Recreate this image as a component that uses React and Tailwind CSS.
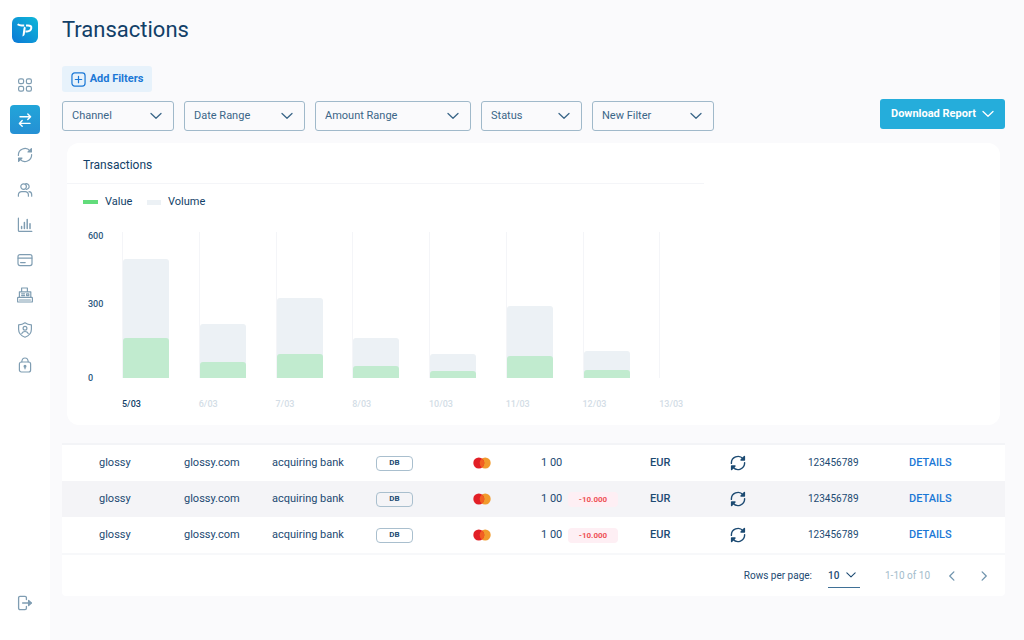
import React, { useState } from 'react';
import clsx from 'clsx';

const Icon = ({ children, className = 'w-4 h-4', strokeWidth = 1.1 }) => (
    <svg
        viewBox="0 0 16 16"
        className={className}
        fill="none"
        stroke="currentColor"
        strokeWidth={strokeWidth}
        strokeLinecap="round"
        strokeLinejoin="round"
        aria-hidden="true"
    >
        {children}
    </svg>
);

const Chevron = ({ className }) => (
    <svg viewBox="0 0 12 8" className={className} fill="none" stroke="currentColor" strokeWidth="1.3" strokeLinecap="round" strokeLinejoin="round" aria-hidden="true">
        <path d="M1 1.5 6 6.2 11 1.5" />
    </svg>
);

const refreshShape = (
    <>
        <path d="M1.4 8.4A6.6 6.6 0 0 1 13 3.8" />
        <path d="M14.6 7.6A6.6 6.6 0 0 1 3 12.2" />
        <path d="M14.4 1.6v3.4h-3.4z" fill="currentColor" />
        <path d="M1.6 14.4v-3.4h3.4z" fill="currentColor" />
    </>
);

const menu = [
    {
        label: 'Dashboard',
        shape: (
            <>
                <rect x="1.6" y="1.9" width="5" height="4.8" rx="1.6" />
                <rect x="9.4" y="1.9" width="5" height="4.8" rx="1.6" />
                <rect x="1.6" y="9.4" width="5" height="4.8" rx="1.6" />
                <rect x="9.4" y="9.4" width="5" height="4.8" rx="1.6" />
            </>
        ),
    },
    {
        label: 'Transactions',
        active: true,
        shape: (
            <>
                <path d="M3 4.8h10.6M10.8 2l2.8 2.8-2.8 2.8" />
                <path d="M13 11.4H2.4M5.2 8.6l-2.8 2.8 2.8 2.8" />
            </>
        ),
    },
    { label: 'Recurring', shape: refreshShape },
    {
        label: 'Customers',
        shape: (
            <>
                <circle cx="6.6" cy="4.6" r="2.8" />
                <path d="M8.6 1.8a2.8 2.8 0 1 1 .6 5.5" />
                <path d="M1.4 14.2v-1.4A3.2 3.2 0 0 1 4.6 9.6h3.6a3.2 3.2 0 0 1 3.2 3.2v1.4" />
                <path d="M12 9.7a3 3 0 0 1 2.7 3v1.5" />
            </>
        ),
    },
    {
        label: 'Reports',
        shape: (
            <>
                <path d="M1.4 1.2v12.2a1 1 0 0 0 1 1h12.4" />
                <path d="M4.6 11.6V9.4M7.4 11.6V5.6M10.2 11.6V2.6M13 11.6V6.8" strokeWidth="1.5" />
            </>
        ),
    },
    {
        label: 'Cards',
        shape: (
            <>
                <rect x="1" y="2.6" width="14" height="11" rx="2" />
                <path d="M1.2 6.2h13.6M3.6 10.6h4.6" />
            </>
        ),
    },
    {
        label: 'Point of sale',
        shape: (
            <>
                <path d="M4.6 4.4V1h5.800v3.400" />
                <path d="M2.400 10V4.800h11.400V10" />
                <rect x="0.6" y="10.4" width="14.8" height="4.6" rx="0.6" />
                <path d="M2.6 13h10.8M4.600 6.800h3M4.600 8.600h3M9.600 6.800h2.200v1.800H9.600z" />
            </>
        ),
    },
    {
        label: 'Security',
        shape: (
            <>
                <path d="M8 .8c1.8 1.4 4 2 6.4 2v4.4c0 4-2.6 6.6-6.4 8-3.8-1.4-6.4-4-6.4-8V2.8C4 2.8 6.2 2.2 8 .8z" />
                <circle cx="8" cy="6.2" r="1.9" />
                <path d="M4.8 11.6c.6-1.4 1.7-2.1 3.2-2.1s2.6.7 3.2 2.1" />
            </>
        ),
    },
    {
        label: 'Access',
        shape: (
            <>
                <rect x="2.4" y="5" width="11.2" height="10" rx="2" />
                <path d="M4.8 4.8C5 2.4 6.2 1 8 1s3 1.4 3.2 3.8" />
                <circle cx="8" cy="9.2" r=".9" fill="currentColor" />
                <path d="M8 9.8v2" />
            </>
        ),
    },
];

const filters = [
    { label: 'Channel', width: 'w-[112px]' },
    { label: 'Date Range', width: 'w-[121px]' },
    { label: 'Amount Range', width: 'w-[156px]' },
    { label: 'Status', width: 'w-[101px]' },
    { label: 'New Filter', width: 'w-[122px]' },
];

// bar heights are in chart pixels
const days = [
    { day: '5/03', volume: 119, value: 40 },
    { day: '6/03', volume: 54, value: 16 },
    { day: '7/03', volume: 80, value: 24 },
    { day: '8/03', volume: 40, value: 12 },
    { day: '10/03', volume: 24, value: 7 },
    { day: '11/03', volume: 72, value: 22 },
    { day: '12/03', volume: 27, value: 8 },
    { day: '13/03', volume: 0, value: 0 },
];

const rows = [
    { id: 1, refund: null },
    { id: 2, refund: '-10.000' },
    { id: 3, refund: '-10.000' },
];

const Logo = () => (
    <svg viewBox="0 0 26 26" className="w-[26px] h-[26px]" role="img" aria-label="Home">
        <defs>
            <linearGradient id="logo" x1="1" y1="0" x2="0" y2="1">
                <stop offset="0" stopColor="#0fb8d8" />
                <stop offset="1" stopColor="#0b78d6" />
            </linearGradient>
        </defs>
        <rect width="26" height="26" rx="6" fill="url(#logo)" />
        <path d="M5.6 7.2c1.2.9 2.4 1.2 4 1.2h2.6M14 8.4h2c2.4 0 3.6 1 3.3 2.8-.3 2-1.9 3.2-4.3 3.2h-1.6" fill="none" stroke="#fff" strokeWidth="2" strokeLinejoin="round" />
        <path d="M12.8 9.4c-.9.7-1.2 1.4-1.4 2.6l-1 7.4c1.5-.4 2.2-1.2 2.4-2.6l.9-6z" fill="#fff" />
    </svg>
);

const Sidebar = () => (
    <nav className="w-[50px] shrink-0 bg-white flex flex-col items-center pt-[17px] pb-[29px]" aria-label="Main">
        <a href="#home"><Logo /></a>
        <div className="mt-[27px] flex flex-col gap-1.5">
            {menu.map((item) => (
                <button
                    key={item.label}
                    type="button"
                    aria-label={item.label}
                    className={clsx(
                        'w-[30px] h-[29px] rounded-sm flex items-center justify-center',
                        item.active ? 'bg-linear-to-b from-[#22a5d9] to-[#2590d4] text-white' : 'text-[#7f9db2]'
                    )}
                >
                    <Icon strokeWidth={item.active ? 1.4 : 1.2}>{item.shape}</Icon>
                </button>
            ))}
        </div>
        <button type="button" aria-label="Log out" className="mt-auto text-[#7f9db2]">
            <Icon strokeWidth={1.3}>
                <path d="M9.4 4.6V2.8a1.4 1.4 0 0 0-1.4-1.4H3a1.4 1.4 0 0 0-1.4 1.4v10.4A1.4 1.4 0 0 0 3 14.6h5a1.4 1.4 0 0 0 1.4-1.4v-1.8" />
                <path d="M5.6 8h8.4" />
                <path d="M11.6 5.4 14.4 8l-2.8 2.6z" fill="currentColor" />
            </Icon>
        </button>
    </nav>
);

const Chart = () => (
    <section className="mx-[5px] mt-3 bg-white rounded-xl pb-[15px]">
        <h2 className="max-w-[637px] h-[41px] pl-4 pt-1 flex items-center border-b border-[#f4f5f8] text-[12px] text-[#123f68]">Transactions</h2>
        <div className="flex items-center h-9 pl-4 text-[11px] text-[#123f68]">
            <span className="w-[15px] h-1 bg-[#62dc7b]" />
            <span className="ml-[7px] w-[42px]">Value</span>
            <span className="w-3.5 h-[5px] bg-[#ecf1f5]" />
            <span className="ml-[7px]">Volume</span>
        </div>
        <div className="flex pl-[21px] pt-3">
            <div className="w-[34px] shrink-0 h-[152px] flex flex-col text-[9px] leading-3 font-medium text-[#2d5a80]">
                <span className="-mt-0.5">600</span>
                <span className="mt-14">300</span>
                <span className="mt-auto">0</span>
            </div>
            <div className="grid grid-cols-8 w-full max-w-[614px]">
                {days.map((d, i) => (
                    <div key={d.day}>
                        <div className="h-[146px] border-l border-[#f4f5f8] flex items-end">
                            <div className="w-[46px] rounded-t-[3px] bg-[#ecf1f5] flex items-end" style={{ height: d.volume }}>
                                <div className="w-full rounded-t-[3px] bg-[#c1ebcf]" style={{ height: d.value }} />
                            </div>
                        </div>
                        <div className={clsx('mt-5 text-[9px] leading-3 font-medium', i === 0 ? 'text-[#123f68]' : 'text-[#d3dde6]')}>{d.day}</div>
                    </div>
                ))}
            </div>
        </div>
    </section>
);

const Table = () => {
    const [perPage, setPerPage] = useState('10');

    return (
        <section className="mt-[18px] bg-white rounded-b-sm border-t-2 border-[#f3f4f7] text-[#1c4a72]">
            <table className="w-full table-fixed text-[11px] leading-4">
                <colgroup>
                    <col className="w-[122px]" />
                    <col className="w-[88px]" />
                    <col className="w-[104px]" />
                    <col className="w-[97px]" />
                    <col className="w-[68px]" />
                    <col className="w-[109px]" />
                    <col className="w-[80px]" />
                    <col className="w-[78px]" />
                    <col className="w-[101px]" />
                    <col className="w-[96px]" />
                </colgroup>
                <tbody>
                    {rows.map((row, i) => (
                        <tr key={row.id} className={clsx('h-9', i === 1 && 'bg-[#f4f4f7]')}>
                            <td className="pl-[37px]">glossy</td>
                            <td>glossy.com</td>
                            <td>acquiring bank</td>
                            <td>
                                <span className="flex items-center justify-center w-[37px] h-[15px] rounded-sm border border-[#a9bfce] text-[8px] font-bold">DB</span>
                            </td>
                            <td>
                                <svg viewBox="0 0 18 12" className="w-[18px] h-3" role="img" aria-label="Mastercard">
                                    <circle cx="12.2" cy="6" r="5.5" fill="#f19a2c" />
                                    <circle cx="5.8" cy="6" r="5.5" fill="#e21f26" />
                                    <path d="M9 1.5a5.5 5.5 0 0 1 0 9 5.5 5.5 0 0 1 0-9z" fill="#f25f22" />
                                </svg>
                            </td>
                            <td>
                                <div className="flex items-center">
                                    <span className="w-[27px]">1 00</span>
                                    {row.refund && (
                                        <span className="w-[50px] h-[15px] rounded-sm bg-[#feeff4] text-[8px] leading-[15px] font-bold text-center text-[#ee5357]">{row.refund}</span>
                                    )}
                                </div>
                            </td>
                            <td className="font-medium">EUR</td>
                            <td>
                                <Icon className="w-4 h-4" strokeWidth={1.4}>{refreshShape}</Icon>
                            </td>
                            <td className="text-[10px]">123456789</td>
                            <td>
                                <a href={`#details-${row.id}`} className="font-medium text-[#1b78d6]">DETAILS</a>
                            </td>
                        </tr>
                    ))}
                </tbody>
            </table>
            <div className="h-[43px] border-t-2 border-[#f7f8fa] flex items-center justify-end pr-[15px] text-[10px]">
                <label htmlFor="perPage">Rows per page:</label>
                <div className="ml-4 w-8 grid items-center border-b border-[#3f7096]">
                    <select
                        id="perPage"
                        value={perPage}
                        onChange={(e) => setPerPage(e.target.value)}
                        className="col-start-1 row-start-1 h-6 w-full appearance-none bg-transparent font-medium"
                    >
                        <option>10</option>
                        <option>25</option>
                        <option>50</option>
                    </select>
                    <Chevron className="col-start-1 row-start-1 justify-self-end mr-1 w-2.5 h-2 pointer-events-none" />
                </div>
                <span className="ml-[25px] w-[61px] text-[#a3bccb]">1-10 of 10</span>
                <button type="button" aria-label="Previous page" className="text-[#6f93ad]">
                    <Icon className="w-3 h-3" strokeWidth={1.7}><path d="M10.5 2.5 5 8l5.5 5.5" /></Icon>
                </button>
                <button type="button" aria-label="Next page" className="ml-5 text-[#6f93ad]">
                    <Icon className="w-3 h-3" strokeWidth={1.7}><path d="M5.5 2.5 11 8l-5.5 5.5" /></Icon>
                </button>
            </div>
        </section>
    );
};

const App = () => (
    <div className="flex min-h-screen bg-[#fafafc] font-['Roboto',sans-serif] text-[#1c4a72]">
        <Sidebar />
        <main className="flex-1 min-w-0 pl-3 pr-[19px] pt-4">
            <h1 className="text-[22px] leading-7 text-[#123f68]">Transactions</h1>
            <div className="mt-[22px] flex items-end justify-between">
                <div>
                    <button type="button" className="w-[90px] h-[26px] rounded-[3px] bg-[#e7f2fb] flex items-center justify-center gap-1 text-[11px] font-bold text-[#1b78d6]">
                        <Icon className="w-[15px] h-[15px]" strokeWidth={1.3}>
                            <rect x="1" y="1" width="14" height="14" rx="3" />
                            <path d="M8 4.6v6.8M4.6 8h6.8" />
                        </Icon>
                        Add Filters
                    </button>
                    <div className="mt-[9px] flex gap-2.5">
                        {filters.map((f) => (
                            <div key={f.label} className={clsx('grid items-center text-[#3a6688]', f.width)}>
                                <select
                                    aria-label={f.label}
                                    className="col-start-1 row-start-1 h-[30px] w-full appearance-none rounded-[3px] border border-[#a0b9ca] pl-[9px] text-[11px]"
                                >
                                    <option>{f.label}</option>
                                </select>
                                <Chevron className="col-start-1 row-start-1 justify-self-end mr-3 w-3 h-2 pointer-events-none" />
                            </div>
                        ))}
                    </div>
                </div>
                <button type="button" className="mb-0.5 h-[30px] w-[125px] rounded-[3px] bg-[#25addb] flex items-center justify-center gap-1.5 text-[11px] font-bold text-white">
                    Download Report
                    <Chevron className="w-3 h-2" />
                </button>
            </div>
            <Chart />
            <Table />
        </main>
    </div>
);

export default App;
